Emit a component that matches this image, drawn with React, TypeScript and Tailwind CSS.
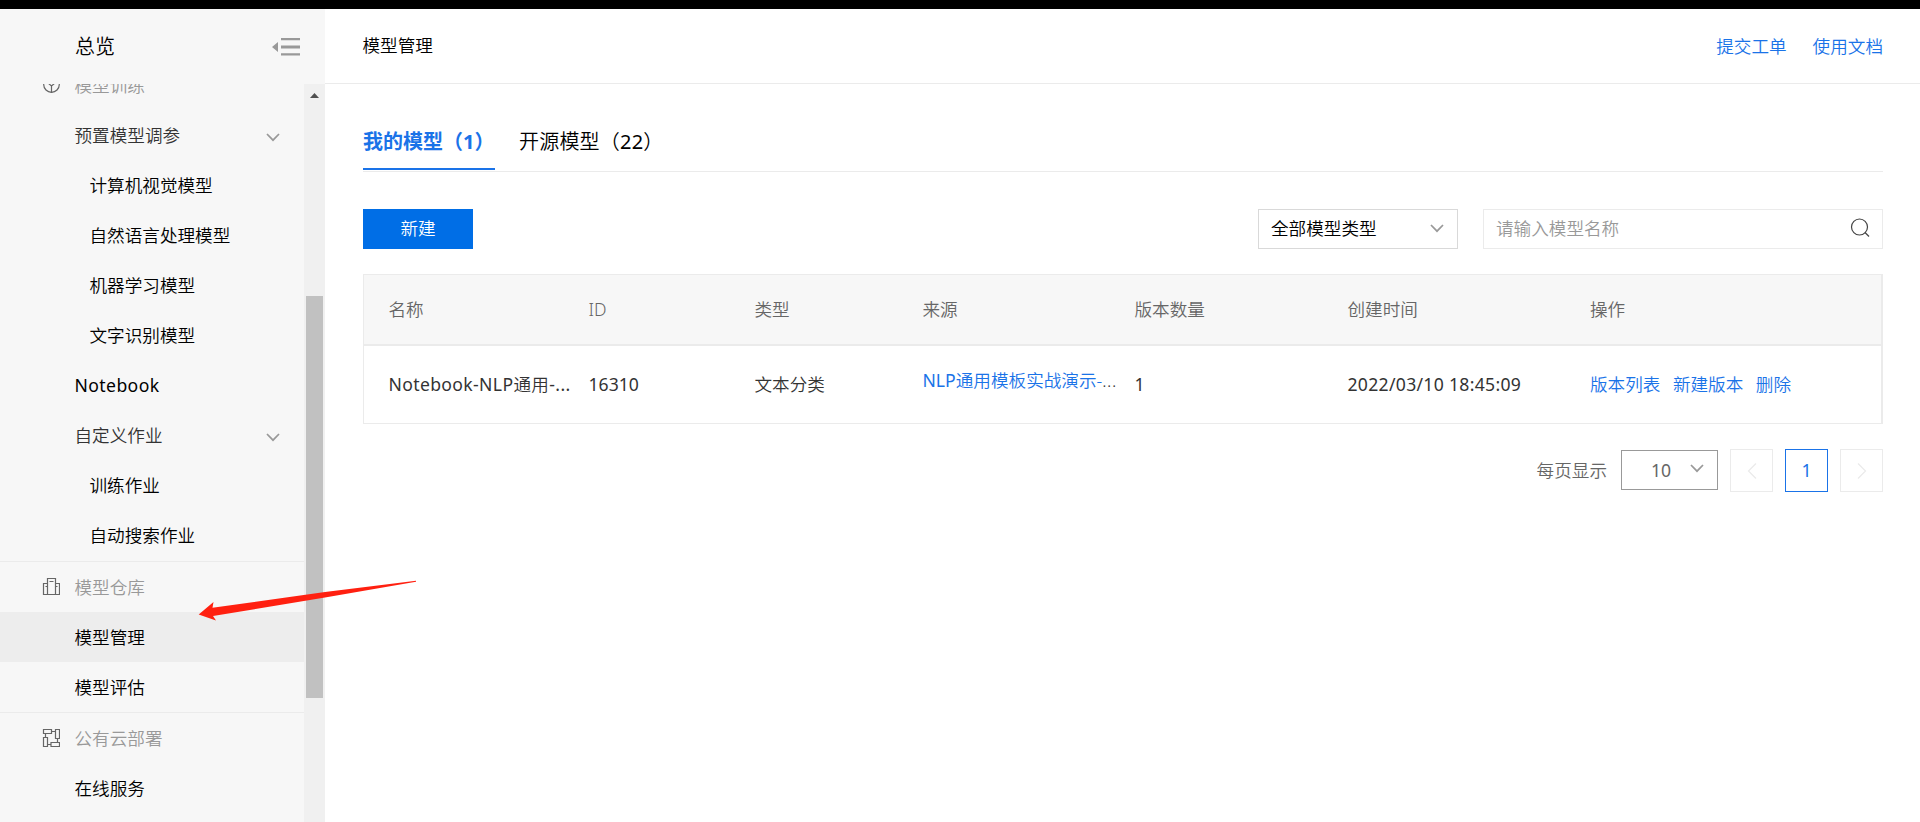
import React from "react";

type Item = { label: string; kind: "section" | "group" | "leaf" | "child"; icon?: "train" | "store" | "cloud"; active?: boolean; latin?: boolean };

const upperItems: Item[] = [
  { label: "模型训练", kind: "section", icon: "train" },
  { label: "预置模型调参", kind: "group" },
  { label: "计算机视觉模型", kind: "child" },
  { label: "自然语言处理模型", kind: "child" },
  { label: "机器学习模型", kind: "child" },
  { label: "文字识别模型", kind: "child" },
  { label: "Notebook", kind: "leaf", latin: true },
  { label: "自定义作业", kind: "group" },
  { label: "训练作业", kind: "child" },
  { label: "自动搜索作业", kind: "child" },
];

const lowerItems: Item[] = [
  { label: "模型仓库", kind: "section", icon: "store" },
  { label: "模型管理", kind: "leaf", active: true },
  { label: "模型评估", kind: "leaf" },
  { label: "公有云部署", kind: "section", icon: "cloud" },
  { label: "在线服务", kind: "leaf" },
];

const kindClass = {
  section: "pl-[42px] text-[#999] border-t border-[#ebebeb] h-[51px]",
  group: "pl-[74.500px] text-[#333] h-[50px]",
  leaf: "pl-[74.500px] text-black h-[50px]",
  child: "pl-[89.500px] text-black h-[50px]",
};

function Chevron({ className }: { className?: string }) {
  return (
    <svg width="14" height="9" viewBox="0 0 14 9" fill="none" stroke="#999" strokeWidth="1.7" className={className}>
      <path d="M1 1l6 6.2L13 1" />
    </svg>
  );
}

function SectionIcon({ name }: { name: "train" | "store" | "cloud" }) {
  return (
    <svg width="18" height="18" viewBox="0 0 18 18" fill="none" stroke="#666" strokeWidth="1.2" className="mr-[14.500px] shrink-0">
      {name === "train" && (
        <>
          <circle cx="9.500" cy="8.5" r="7.800" />
          <path d="M9.500 17V9M6 7l3.500 3L13 7" />
        </>
      )}
      {name === "store" && (
        <>
          <path d="M5.500 5.5h-4v11h16v-11h-4" />
          <path d="M5.500 16.5V.5h8v16M7.500 3.5h4M3.500 8.5h2M13.500 8.5h2" />
        </>
      )}
      {name === "cloud" && (
        <path d="M1.500.5h8v4h-8zM13.500.5h4v9h-4zM1.500 8.500h4v9h-4zM9 13.500h8.500v4H9zM3.500 4.500v4M9.500 2.500h4M15.500 9.500v4M5.500 15.500H9" />
      )}
    </svg>
  );
}

function MenuRow({ item }: { item: Item }) {
  return (
    <div className={`flex shrink-0 items-center ${kindClass[item.kind]} ${item.active ? "bg-[#ededed]" : ""}`}>
      {item.icon && <SectionIcon name={item.icon} />}
      <span className={item.latin ? "font-normal tracking-[.4px]" : ""}>{item.label}</span>
      {item.kind === "group" && <Chevron className="mt-[4px] mr-[24px] ml-auto" />}
    </div>
  );
}

function Sidebar() {
  return (
    <aside className="flex w-[325px] shrink-0 flex-col bg-[#f7f7f7]">
      <div className="flex h-[75px] shrink-0 items-center justify-between pr-[25px] pl-[75px]">
        <span className="text-[20px] text-black">总览</span>
        <svg width="28" height="18" viewBox="0 0 28 18" fill="#999">
          <path d="M0 9l6-5v10zM9 0h19v2.300H9zM9 7.500h19v3H9zM9 15.200h19v2.300H9z" />
        </svg>
      </div>
      <div className="flex min-h-0 flex-1">
        <nav className="flex w-[304px] flex-col overflow-hidden">
          <div className="-mt-[25px] flex flex-col pb-px">
            {upperItems.map((it) => (
              <MenuRow key={it.label} item={it} />
            ))}
          </div>
          <div className="flex flex-col">
            {lowerItems.map((it) => (
              <MenuRow key={it.label} item={it} />
            ))}
          </div>
        </nav>
        <div className="flex w-[21px] flex-col items-center bg-[#f0f0f0]">
          <svg width="9" height="5" viewBox="0 0 9 5" fill="#505050" className="mt-[9px]">
            <path d="M0 5L4.500 0 9 5z" />
          </svg>
          <div className="mt-[198px] h-[402px] w-[17px] bg-[#c1c1c1]" />
        </div>
      </div>
    </aside>
  );
}

const cols = "grid grid-cols-[200px_166px_168px_212px_213px_242.500px_1fr] pl-[24.500px]";

function ModelTable() {
  return (
    <div className="mt-[25px] h-[150px] border border-r-2 border-[#ebebeb]">
      <div className={`${cols} h-[71px] items-center border-b-2 border-[#ebebeb] bg-[#f7f7f7] pb-[2px] text-[#666]`}>
        {["名称", "ID", "类型", "来源", "版本数量", "创建时间", "操作"].map((h) => (
          <span key={h}>{h}</span>
        ))}
      </div>
      <div className={`${cols} h-[77px] items-center pb-[2px] text-[#333]`}>
        <span className="tracking-[.35px]"><span className="font-normal">Notebook-NLP</span>通用<span className="font-normal">-...</span></span>
        <span className="font-normal">16310</span>
        <span>文本分类</span>
        <span className="pb-[7px]"><a className="text-[#1a73e8]"><span className="font-normal">NLP</span>通用模板实战演示-</a><span className="tracking-[.6px]">...</span></span>
        <span className="font-normal">1</span>
        <span className="font-normal tracking-[.3px]">2022/03/10 18:45:09</span>
        <span className="flex gap-[12.5px] text-[#1a73e8]">
          <a>版本列表</a>
          <a>新建版本</a>
          <a>删除</a>
        </span>
      </div>
    </div>
  );
}

function Pagination() {
  return (
    <div className="mt-[25px] flex items-center justify-end gap-3 text-[#666]">
      <span className="mr-[2px] pb-[2px]">每页显示</span>
      <div className="mb-px flex h-10 w-[97px] items-center justify-between border border-[#999] pr-[13px] pl-[29px]">
        <span className="font-normal">10</span>
        <Chevron className="-mt-[3px]" />
      </div>
      <button className="flex size-[43px] items-center justify-center border border-[#ebebeb]">
        <svg width="10" height="16" viewBox="0 0 10 16" fill="none" stroke="#ebebeb" strokeWidth="1.3"><path d="M9 .5L1.500 8 9 15.500" /></svg>
      </button>
      <button className="flex size-[43px] items-center justify-center border border-[#1a73e8] pb-px font-normal text-[#1a73e8]">1</button>
      <button className="flex size-[43px] items-center justify-center border border-[#ebebeb]">
        <svg width="10" height="16" viewBox="0 0 10 16" fill="none" stroke="#ebebeb" strokeWidth="1.3"><path d="M1 .5L8.500 8 1 15.500" /></svg>
      </button>
    </div>
  );
}

export default function App() {
  return (
    <div className="relative flex h-[822px] w-[1920px] flex-col overflow-hidden bg-white font-['Noto_Sans','Noto_Sans_CJK_SC',sans-serif] text-[17.600px] leading-[24px] font-[350] whitespace-nowrap">
      <div className="h-[9px] shrink-0 bg-black" />
      <div className="flex min-h-0 flex-1">
        <Sidebar />
        <main className="flex flex-1 flex-col">
          <header className="flex h-[75px] shrink-0 items-center justify-between border-b border-[#ebebeb] pr-[37px] pl-[37.500px]">
            <span className="pb-[2px] text-black">模型管理</span>
            <nav className="flex gap-[26px] text-[#1a73e8]">
              <a>提交工单</a>
              <a>使用文档</a>
            </nav>
          </header>
          <section className="pt-[38px] pr-[37px] pl-[38px]">
            <div className="flex h-[50px] gap-6 border-b border-[#ebebeb] text-[20px]">
              <div className="flex h-[48px] w-[132px] items-center border-b-2 border-[#1a73e8] pb-[6px] font-bold text-[#1a73e8]">我的模型（1）</div>
              <div className="flex h-[48px] items-center pb-2 tracking-[.2px] text-black">开源模型（<span className="font-normal">22</span>）</div>
            </div>
            <div className="mt-[37px] flex h-10">
              <button className="w-[110px] bg-[#006ee6] pb-[2px] text-white">新建</button>
              <div className="ml-auto flex w-[200px] items-center justify-between border border-[#d9d9d9] pr-[13px] pb-[2px] pl-[12px] text-black">
                全部模型类型
                <Chevron />
              </div>
              <div className="ml-[25px] flex w-[400px] items-center justify-between border border-[#ebebeb] pr-[12px] pb-[2px] pl-[12px] text-[#999]">
                请输入模型名称
                <svg width="20" height="20" viewBox="0 0 20 20" fill="none" stroke="#444" strokeWidth="1.200">
                  <circle cx="9.500" cy="9" r="8" />
                  <path d="M15 14.500l4 4" />
                </svg>
              </div>
            </div>
            <ModelTable />
            <Pagination />
          </section>
        </main>
      </div>
      <svg width="220" height="42" viewBox="0 0 220 42" fill="#ff2010" className="absolute top-[580px] left-[198px]">
        <path d="M.7 34.500L15.500 22 14.500 27.800 127 12 218 .8 218 1.800 127 17.500 15 36 18 40.500z" />
      </svg>
    </div>
  );
}
